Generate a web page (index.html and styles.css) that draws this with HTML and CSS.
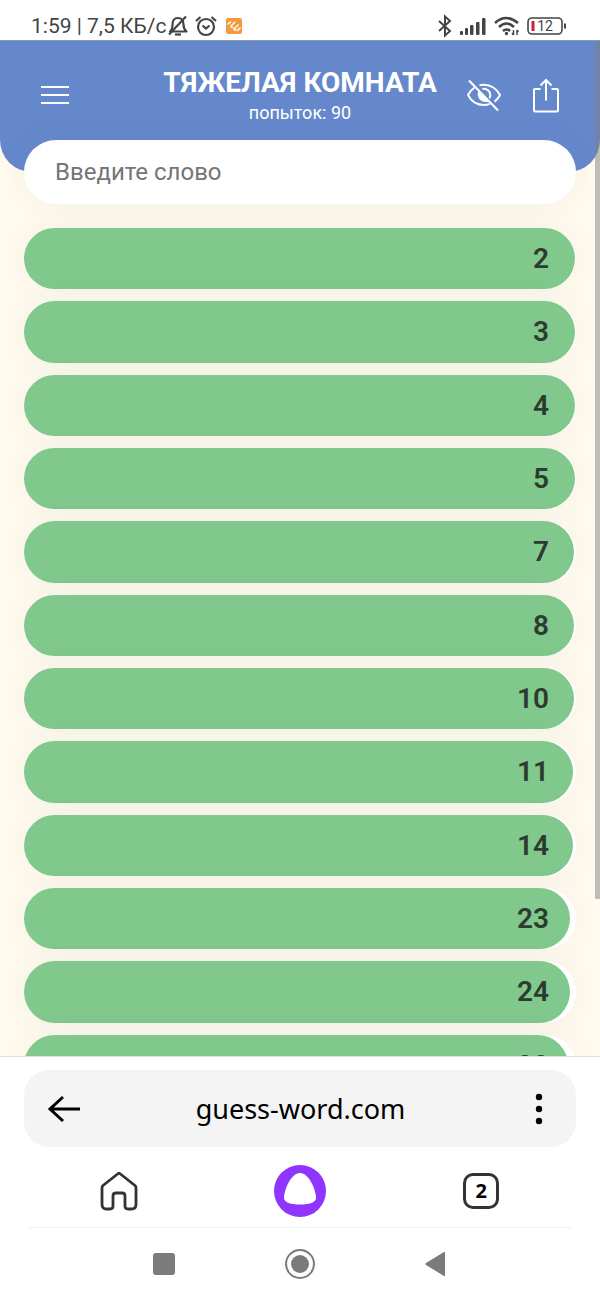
FILE: index.html
```html
<!DOCTYPE html>
<html lang="ru">
<head>
<meta charset="utf-8">
<meta name="viewport" content="width=device-width, initial-scale=1">
<title>Тяжелая комната</title>
<link rel="stylesheet" href="styles.css">
</head>
<body>
<div class="status">
  <span class="status-text">1:59 | 7,5 КБ/с</span>
  <svg class="status-bell" width="20" height="24" viewBox="0 0 20 24" fill="none" stroke="#444" stroke-width="2.200"><path d="M2 17.500c2.500-2 2.500-4 2.500-7 0-4 2-6.500 5.500-6.500s5.500 2.500 5.500 6.500c0 3 .5 5 3 7z" stroke-linejoin="round"/><path d="M7 20.500h6"/><path d="M18 2.500 1 20.500"/></svg>
  <svg class="status-alarm" width="24" height="24" viewBox="0 0 24 24" fill="none" stroke="#444" stroke-width="2.200"><circle cx="12" cy="13" r="8"/><path d="m8.500 11.500 3.500 3 3.500-3M2 7l4.500-4M22 7l-4.500-4"/></svg>
  <svg class="status-app" width="16" height="16" viewBox="0 0 16 16"><rect width="16" height="16" rx="2" fill="#f59a3c"/><path d="M1.500 6.500 5 3.500M4.500 8.500 9 4M7.500 11.500l5-5M11 13l3.500-3.500M4.500 8.500q1.500 1.500 3 .5M7.500 11.500q1.500 1 3 0" fill="none" stroke="#fff" stroke-width="1.500"/></svg>
  <span class="status-right">
    <svg width="16" height="24" viewBox="0 0 16 24" fill="none" stroke="#444" stroke-width="2"><path d="m2 7 11 10-5 4.500V2.500L13 7 2 17"/></svg>
    <svg width="28" height="20" viewBox="0 0 28 20" fill="#444"><rect x="1" y="15" width="3" height="4" rx="1"/><rect x="6" y="12" width="3" height="7" rx="1"/><rect x="11" y="9" width="3.500" height="10" rx="1"/><rect x="17" y="6" width="3.500" height="13" rx="1"/><rect x="23" y="2" width="3.500" height="17" rx="1"/></svg>
    <svg width="28" height="20" viewBox="0 0 28 20" fill="none" stroke="#444" stroke-width="2.600"><path d="M2 7q11-10 23 0M6 11q7.500-7 15 0M10 15q3.500-3 7 0"/><circle cx="13.500" cy="17.500" r="1.700" fill="#444" stroke="none"/><path d="M20.500 14v5m0 0-1.500-2M24 19v-5m0 0 1.500 2" stroke-width="1.400"/></svg>
    <svg width="40" height="20" viewBox="0 0 40 20" fill="none"><rect x="1" y="2" width="34" height="16" rx="4" stroke="#444" stroke-width="1.600"/><path d="M38 7.500v5" stroke="#444" stroke-width="2"/><rect x="4.500" y="5" width="3" height="10" fill="#cb2036"/><text x="18" y="15" class="battery-level">12</text></svg>
  </span>
</div>

<main class="site">
  <header class="site-header">
    <button class="icon-button" aria-label="Меню"><svg width="30" height="24" viewBox="0 0 30 24" stroke="#fff" stroke-width="2"><path d="M1 4h28M1 12h28M1 20h28"/></svg></button>
    <div class="heading">
      <h1 class="title">ТЯЖЕЛАЯ КОМНАТА</h1>
      <p class="attempts">попыток: 90</p>
    </div>
    <div class="actions">
      <button class="icon-button" aria-label="Скрыть слова"><svg width="36" height="36" viewBox="0 0 36 36" fill="none" stroke="#fff" stroke-width="2"><path d="M8.500 10.500C5.500 12.500 3.300 15.300 2 18c3 5.800 9 10 16 10 2 0 4-.4 5.700-1.100M13.500 8.200C15 7.900 16.500 7.700 18 7.700c6.500 0 13 4 16 10.300-1.300 2.700-3.200 4.900-5.500 6.600"/><path d="M16.500 12a6.300 6.300 0 0 1 7.800 6q0 2-1 3.200"/><path d="m12.300 14 10.500 10.700q-5.800 1.300-9.200-2.200-3-4-1.300-8.500z" fill="#fff" stroke="none"/><path d="m3 3.500 29 30"/></svg></button>
      <button class="icon-button" aria-label="Поделиться"><svg width="28" height="36" viewBox="0 0 28 36" fill="none" stroke="#fff" stroke-width="2"><path d="M8.500 12H3a1 1 0 0 0-1 1v20.500a1 1 0 0 0 1 1h22a1 1 0 0 0 1-1V13a1 1 0 0 0-1-1h-5.500M14 23.500V3m-5.500 5.500L14 3l5.500 5.500"/></svg></button>
    </div>
  </header>
  <input class="word" type="text" aria-label="Слово" placeholder="Введите слово">
  <ol class="guesses">
    <li class="guess"><span class="bar" style="width:99.9%"></span><span class="rank">2</span></li>
    <li class="guess"><span class="bar" style="width:99.9%"></span><span class="rank">3</span></li>
    <li class="guess"><span class="bar" style="width:99.8%"></span><span class="rank">4</span></li>
    <li class="guess"><span class="bar" style="width:99.8%"></span><span class="rank">5</span></li>
    <li class="guess"><span class="bar" style="width:99.7%"></span><span class="rank">7</span></li>
    <li class="guess"><span class="bar" style="width:99.7%"></span><span class="rank">8</span></li>
    <li class="guess"><span class="bar" style="width:99.6%"></span><span class="rank">10</span></li>
    <li class="guess"><span class="bar" style="width:99.5%"></span><span class="rank">11</span></li>
    <li class="guess"><span class="bar" style="width:99.4%"></span><span class="rank">14</span></li>
    <li class="guess"><span class="bar" style="width:99%"></span><span class="rank">23</span></li>
    <li class="guess"><span class="bar" style="width:98.9%"></span><span class="rank">24</span></li>
    <li class="guess"><span class="bar" style="width:98.6%"></span><span class="rank">29</span></li>
  </ol>
  <div class="scroll-thumb"></div>
</main>

<footer class="browser">
  <div class="address">
    <button class="icon-button" aria-label="Назад"><svg width="34" height="28" viewBox="0 0 34 28" fill="none" stroke="#000" stroke-width="3"><path d="M33 14H3M16 2 3 14l13 12"/></svg></button>
    <span class="url">guess-word.com</span>
    <button class="icon-button more" aria-label="Ещё"><svg width="10" height="32" viewBox="0 0 10 32"><circle cx="5" cy="4" r="3.200"/><circle cx="5" cy="16" r="3.200"/><circle cx="5" cy="28" r="3.200"/></svg></button>
  </div>
  <nav class="tools">
    <button class="icon-button" aria-label="Домой"><svg width="38" height="40" viewBox="0 0 38 40" fill="none" stroke="#333" stroke-width="2.800" stroke-linejoin="round"><path d="M18.200 2.500q.8-.6 1.600 0L35 14.500q1 1 1 2.500v16.500q0 4.500-4.500 4.500H28q-3 0-3-3V25q0-3-3-3h-6q-3 0-3 3v10q0 3-3 3H6.500Q2 38 2 33.500V17q0-1.500 1-2.500z"/></svg></button>
    <button class="icon-button" aria-label="Алиса"><svg width="52" height="52" viewBox="0 0 52 52"><circle cx="26" cy="26" r="26" fill="#8f35ff"/><path d="M26 8C17 8 10 25 10 33c0 4.500 7 6.500 16 6.500s16-2 16-6.500C42 25 35 8 26 8z" fill="#fff"/></svg></button>
    <button class="tabs" aria-label="Вкладки: 2">2</button>
  </nav>
  <nav class="system">
    <button class="icon-button" aria-label="Недавние"><svg width="24" height="24" viewBox="0 0 24 24"><rect x="1" y="1" width="22" height="22" rx="3" fill="#7b7b7b"/></svg></button>
    <button class="icon-button" aria-label="Главный экран"><svg width="32" height="32" viewBox="0 0 32 32"><circle cx="16" cy="16" r="14" fill="none" stroke="#7b7b7b" stroke-width="2"/><circle cx="16" cy="16" r="9" fill="#7b7b7b"/></svg></button>
    <button class="icon-button" aria-label="Назад в системе"><svg width="24" height="28" viewBox="0 0 24 28"><path d="M2 13 20 2q1-.5 1 .7v22.600q0 1.200-1 .7L2 15q-1.500-1 0-2z" fill="#7b7b7b"/></svg></button>
  </nav>
</footer>
</body>
</html>
```
FILE: styles.css
```css
* { box-sizing: border-box; }

body {
  margin: 0;
  height: 100vh;
  display: flex;
  flex-direction: column;
  background: #fff;
  font-family: Roboto, "Noto Sans", sans-serif;
}

svg { display: block; }

.icon-button {
  padding: 0;
  border: 0;
  background: none;
  display: block;
}

.status {
  flex: none;
  display: flex;
  align-items: center;
  height: 41px;
  padding: 11px 33px 0 31px;
  color: #444;
  border-bottom: 1px solid #8d97b0;
}

.status-text { font-size: 21px; line-height: 28px; }
.status-bell { margin-left: 2px; }
.status-alarm { margin-left: 6px; }
.status-app { margin-left: 8px; }

.status-right {
  display: flex;
  align-items: center;
  gap: 6px;
  margin-left: auto;
}

.battery-level {
  font-size: 14px;
  fill: #444;
  text-anchor: middle;
}

.site {
  position: relative;
  flex: 1;
  min-height: 0;
  overflow: hidden;
  background: #fffaed;
}

.site-header {
  display: grid;
  grid-template-columns: 1fr auto 1fr;
  align-items: center;
  padding: 24px 40px 47px;
  border-radius: 0 0 32px 32px;
  background: #6588cd;
  color: #fff;
}

.heading { text-align: center; }
.title { margin: 0; font-size: 28px; line-height: 36px; font-weight: 700; }
.attempts { margin: 0; font-size: 18px; line-height: 24px; }

.actions {
  display: flex;
  justify-content: flex-end;
  gap: 30px;
}

.word {
  display: block;
  position: relative;
  width: calc(100% - 48px);
  height: 64px;
  margin: -32px 24px 24px;
  padding: 0 31px;
  border: 0;
  border-radius: 32px;
  background: #fff;
  box-shadow: 0 0 32px rgba(70, 70, 110, 0.06);
  font: 24px Roboto, "Noto Sans", sans-serif;
}

.word::placeholder { color: #757575; opacity: 1; }

.guesses {
  display: grid;
  grid-auto-rows: 1fr;
  gap: 12px;
  min-height: 868px;
  margin: 0 24px;
  padding: 0;
  list-style: none;
}

.guess {
  display: grid;
  border-radius: 32px;
  background: #fff;
  box-shadow: 0 0 32px rgba(70, 70, 110, 0.05);
}

.bar, .rank { grid-area: 1 / 1; }

.bar {
  border-radius: 32px;
  background: #80c88c;
}

.rank {
  align-self: center;
  justify-self: end;
  padding-right: 27px;
  color: #2d3b31;
  font-size: 28px;
  font-weight: 600;
}

.scroll-thumb {
  position: absolute;
  top: 0;
  right: 0;
  width: 5px;
  height: 858px;
  background: rgba(128, 128, 128, 0.5);
}

.browser {
  flex: none;
  border-top: 1px solid #ddd;
  background: #fff;
}

.address {
  display: grid;
  grid-template-columns: 1fr auto 1fr;
  align-items: center;
  height: 77px;
  margin: 13px 24px 0;
  padding: 0 32px 0 23px;
  border-radius: 25px;
  background: #f4f4f4;
}

.address .icon-button { justify-self: start; }
.address .more { justify-self: end; }

.url { padding-left: 10px; font: 27px/36px "Noto Sans", sans-serif; color: #000; }

.tools, .system {
  display: grid;
  grid-template-columns: repeat(3, 1fr);
  align-items: center;
  justify-items: center;
}

.tools {
  height: 81px;
  margin: 0 28px;
  padding: 8px 0 0;
  border-bottom: 1px solid #f2f2f5;
}

.tabs {
  width: 36px;
  height: 36px;
  padding: 0;
  border: 3px solid #333;
  border-radius: 10px;
  background: #fff;
  color: #000;
  font: 700 20px/28px "Noto Sans", sans-serif;
}

.system {
  height: 71px;
  margin: 0 96px;
}
```
